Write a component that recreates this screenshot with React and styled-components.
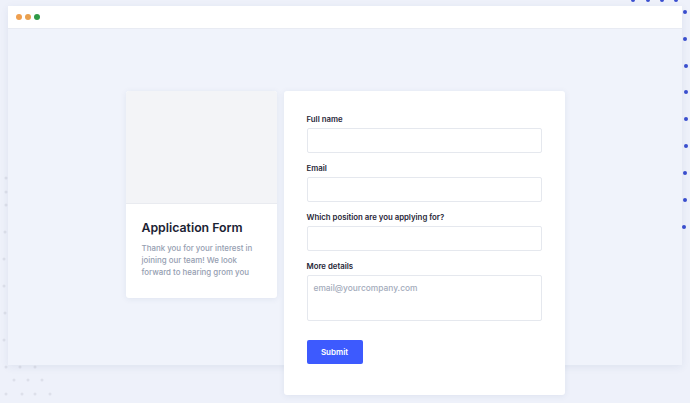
import React from 'react'
import styled, { createGlobalStyle } from 'styled-components'

const GlobalStyle = createGlobalStyle`
  html, body {
    margin: 0;
    padding: 0;
    background: #eef1fa;
    font-family: Inter, "Noto Sans", sans-serif;
    -webkit-font-smoothing: antialiased;
  }
`

const Page = styled.div`
  position: relative;
  width: 690px;
  height: 403px;
  overflow: hidden;
  padding: 6px 8px 0;
  box-sizing: border-box;
`

const Decor = styled.svg`
  position: absolute;
  left: 0;
  top: 0;
  z-index: 0;
`

const Window = styled.div`
  position: relative;
  z-index: 1;
  width: 674px;
  box-shadow: 0 2px 8px rgba(40, 60, 120, 0.08);
`

const TitleBar = styled.div`
  height: 22px;
  background: #ffffff;
  border-bottom: 1px solid #e8ebf3;
  display: flex;
  align-items: center;
  gap: 3px;
  padding-left: 8px;
`

const Light = styled.span`
  width: 6px;
  height: 6px;
  border-radius: 50%;
  background: ${p => p.$color};
`

const Body = styled.div`
  height: 336px;
  background: #f0f3fb;
  display: flex;
  justify-content: center;
  align-items: flex-start;
  gap: 7px;
  padding-top: 62px;
  box-sizing: border-box;
`

const Card = styled.div`
  background: #ffffff;
  border-radius: 3px;
  box-shadow: 0 1px 6px rgba(40, 60, 120, 0.08);
`

const InfoCard = styled(Card)`
  width: 151px;
  overflow: hidden;
`

const Cover = styled.div`
  height: 112px;
  background: #f3f4f7;
  border-bottom: 1px solid #e9ebf0;
`

const InfoText = styled.div`
  padding: 16px 16px 20px;
`

const Title = styled.h1`
  margin: 0 0 6px;
  font-size: 12.3px;
  line-height: 16px;
  font-weight: 600;
  color: #1b2233;
`

const Lead = styled.p`
  margin: 0;
  font-size: 7.9px;
  line-height: 12px;
  font-weight: 500;
  color: #959eb1;
`

const FormCard = styled(Card)`
  width: 281px;
  padding: 23px 23px 31px;
  box-sizing: border-box;
`

const Field = styled.div`
  display: flex;
  flex-direction: column;
  gap: 4px;
  margin-bottom: 10px;
`

const Label = styled.label`
  font-size: 7.8px;
  line-height: 10px;
  font-weight: 600;
  color: #1f2637;
`

const Input = styled.div`
  height: ${p => p.$tall ? '46px' : '25px'};
  border: 1px solid #e5e8ee;
  border-radius: 2px;
  box-sizing: border-box;
  padding: 7px 6px;
  font-size: 8.4px;
  font-weight: 500;
  color: #a3abbb;
`

const Submit = styled.button`
  margin-top: 9px;
  width: 56px;
  height: 24px;
  border: none;
  border-radius: 2px;
  background: #3d5afe;
  color: #ffffff;
  font-family: inherit;
  font-size: 8px;
  font-weight: 600;
`

const blueDots = [
  [633, 0], [648, 0], [662, 0], [676, 0],
  [685, 12], [685, 39], [686, 66], [686, 92], [686, 119],
  [686, 146], [685, 173], [685, 200], [684, 227]
]

const grayDots = [
  [6, 178], [6, 192], [6, 205], [5, 232], [4, 259], [4, 286], [5, 313], [4, 340],
  [6, 367], [20, 367], [35, 367],
  [14, 380], [28, 380], [42, 380],
  [6, 394], [22, 394], [35, 394], [50, 394]
]

export default function App() {
  return (
    <>
      <GlobalStyle />
      <Page>
        <Decor width="690" height="403" viewBox="0 0 690 403">
          {blueDots.map(([x, y], i) => (
            <circle key={'b' + i} cx={x} cy={y} r="2" fill="#3a4fcf" />
          ))}
          {grayDots.map(([x, y], i) => (
            <circle key={'g' + i} cx={x} cy={y} r="1.5" fill="#dde0ea" />
          ))}
        </Decor>
        <Window>
          <TitleBar>
            <Light $color="#ef9f4f" />
            <Light $color="#e9a04f" />
            <Light $color="#2f9a47" />
          </TitleBar>
          <Body>
            <InfoCard>
              <Cover />
              <InfoText>
                <Title>Application Form</Title>
                <Lead>Thank you for your interest in joining our team! We look forward to hearing grom you</Lead>
              </InfoText>
            </InfoCard>
            <FormCard>
              <Field>
                <Label>Full name</Label>
                <Input />
              </Field>
              <Field>
                <Label>Email</Label>
                <Input />
              </Field>
              <Field>
                <Label>Which position are you applying for?</Label>
                <Input />
              </Field>
              <Field>
                <Label>More details</Label>
                <Input $tall>email@yourcompany.com</Input>
              </Field>
              <Submit>Submit</Submit>
            </FormCard>
          </Body>
        </Window>
      </Page>
    </>
  )
}
